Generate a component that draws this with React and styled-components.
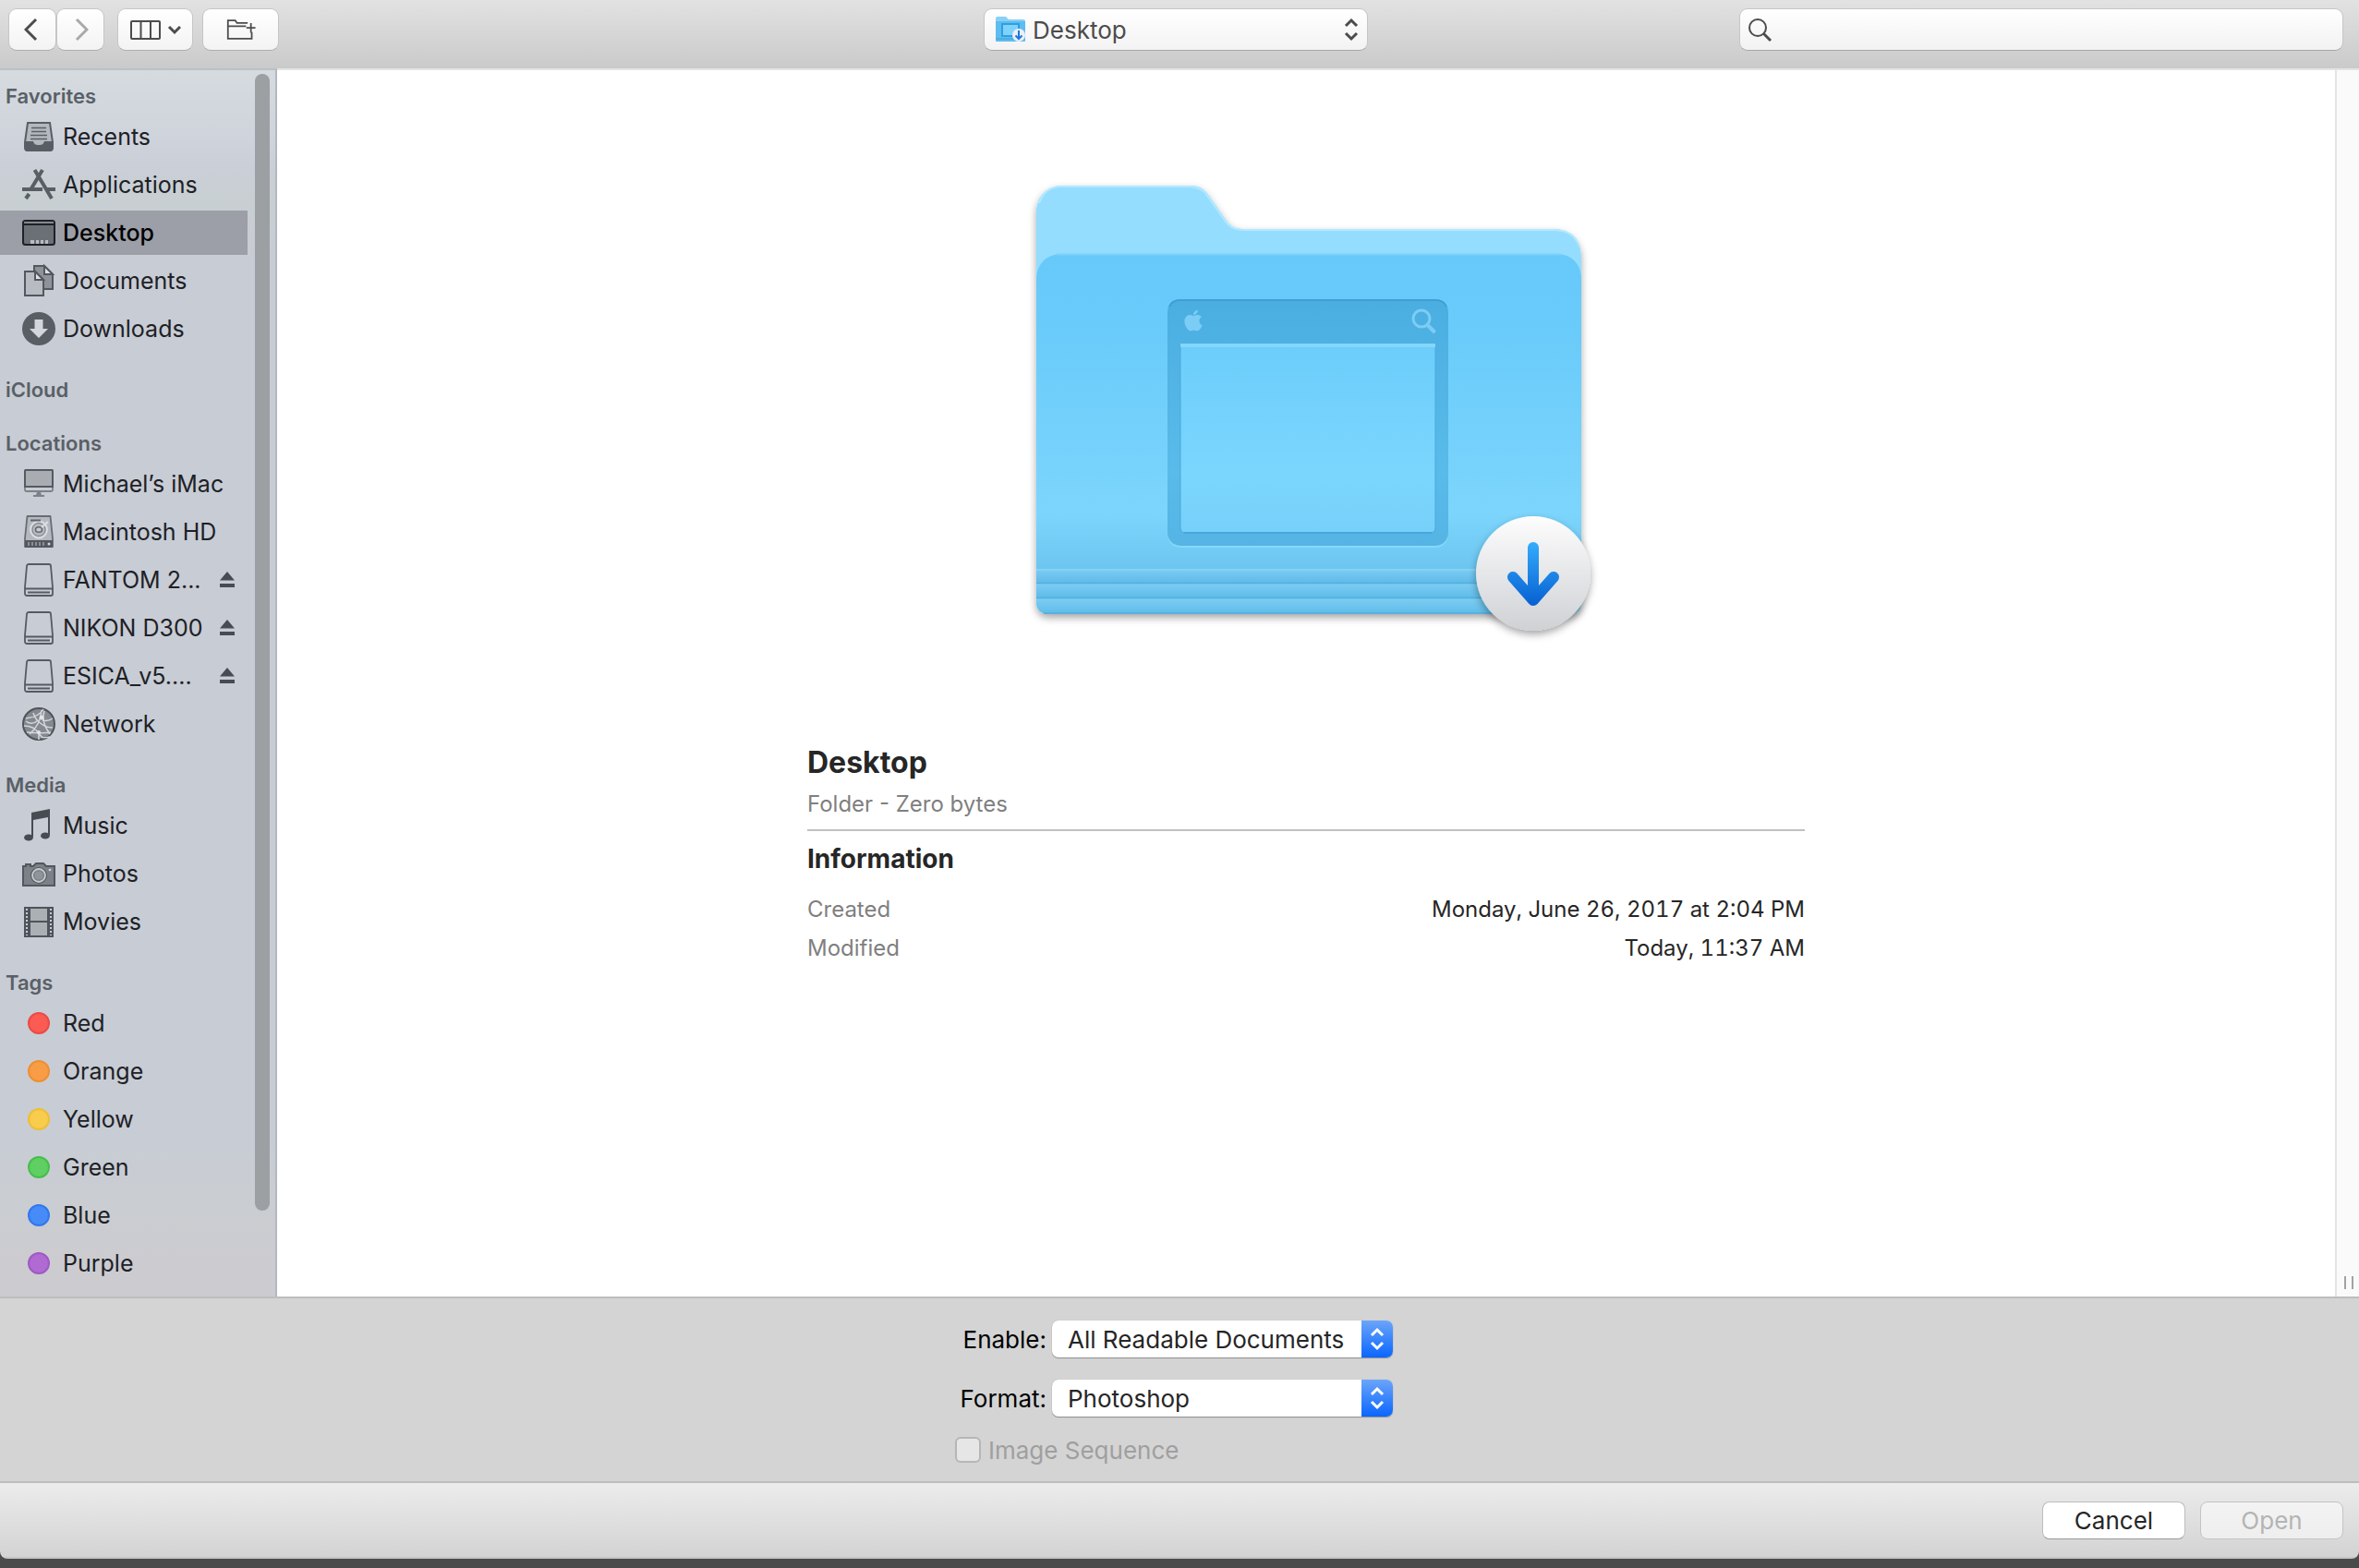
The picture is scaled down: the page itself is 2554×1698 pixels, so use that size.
import React, { useState } from 'react'
import styled, { createGlobalStyle } from 'styled-components'
import { FaApple } from 'react-icons/fa'

const GlobalStyle = createGlobalStyle`
  * {
    box-sizing: border-box;
  }
  body {
    margin: 0;
    background: #4b4b4b;
    font-family: Inter, "Liberation Sans", sans-serif;
    font-size: 26px;
    color: #1c1e20;
  }
  button, input, select {
    font: inherit;
    color: inherit;
    margin: 0;
  }
`;
const Backdrop = styled.div`
  min-height: 100vh;
  padding-bottom: 10px;
  display: flex;
  flex-direction: column;
`;
const Dialog = styled.div`
  flex: 1;
  display: flex;
  flex-direction: column;
  border-radius: 0 0 8px 8px;
  overflow: hidden;
`;

/* toolbar */
const Toolbar = styled.header`
  display: grid;
  grid-template-columns: 1fr 416px 1fr;
  align-items: center;
  padding: 9px 17px 19px 9px;
  background: linear-gradient(#e2e2e2, #cacaca);
`;
const ButtonGroup = styled.div`
  display: flex;
  margin-right: ${(props) => props.$gap || "0"};
`;
const ToolGroups = styled.div`
  display: flex;
`;
const ToolButton = styled.button`
  display: flex;
  align-items: center;
  justify-content: center;
  width: ${(props) => props.$width};
  height: 46px;
  padding: 0;
  border: 1px solid #c6c6c6;
  border-bottom-color: #adadad;
  border-radius: 9px;
  background: linear-gradient(#ffffff, #f3f3f3);
  color: ${(props) => props.$faded ? "#a9a9a9" : "#4c4c4c"};
`;
const SelectBox = styled.div`
  position: relative;
  display: grid;
  > * {
    grid-area: 1 / 1;
  }
`;
const Overlay = styled.span`
  display: flex;
  align-items: center;
  justify-self: ${(props) => props.$side};
  padding: 0 10px 0 13px;
  pointer-events: none;
  z-index: 1;
`;
const PathSelect = styled.select`
  appearance: none;
  width: 100%;
  height: 46px;
  padding: 0 40px 0 52px;
  border: 1px solid #c6c6c6;
  border-bottom-color: #a8a8a8;
  border-radius: 9px;
  background: linear-gradient(#ffffff, #f3f3f3);
  color: #4c4c4c;
`;
const SearchBox = styled.label`
  justify-self: end;
  display: flex;
  align-items: center;
  width: 654px;
  height: 46px;
  padding: 0 8px;
  border: 1px solid #c6c6c6;
  border-bottom-color: #a8a8a8;
  border-radius: 9px;
  background: linear-gradient(#ffffff, #f2f2f2);
`;
const SearchInput = styled.input`
  flex: 1;
  min-width: 0;
  border: 0;
  outline: 0;
  background: none;
`;

/* sidebar */
const Body = styled.div`
  flex: 1;
  display: flex;
`;
const Sidebar = styled.aside`
  display: flex;
  width: 300px;
  border-top: 2px solid #b9c1c8;
  border-right: 2px solid #b3b8c0;
  background: linear-gradient(#d5dbdf 0, #cfd3db 74px, #cbcfd8 100px, #c8cfd2 144px, #c8ccd4 204px, #c8ccd4 1160px, #cacdd1 1230px, #cccbd0 1300px);
`;
const Places = styled.nav`
  width: 268px;
  display: flex;
  flex-direction: column;
  gap: 18px;
  padding: 8px 0;
`;
const PlaceList = styled.ul`
  list-style: none;
  margin: 0;
  padding: 0;
`;
const SectionTitle = styled.h2`
  margin: 0;
  padding-left: 6px;
  font-size: 22px;
  font-weight: 600;
  line-height: 40px;
  color: #596067;
`;
const Place = styled.button`
  display: flex;
  align-items: center;
  gap: 8px;
  width: 100%;
  height: 48px;
  margin-bottom: 4px;
  padding: 0 14px 0 24px;
  border: 0;
  text-align: left;
  white-space: nowrap;
  background: ${(props) => props.$active ? "#9c9fa7" : "none"};
  color: ${(props) => props.$active ? "#000" : "#1d2126"};
  font-weight: ${(props) => props.$active ? "500" : "400"};
  font-size: 25px;
`;
const PlaceName = styled.span`
  flex: 1;
`;
const ScrollTrack = styled.div`
  flex: 1;
  padding: 4px 6px 0 8px;
`;
const ScrollThumb = styled.div`
  height: 93%;
  border-radius: 8px;
  background: #9ca0a3;
`;

/* preview */
const Preview = styled.main`
  flex: 1;
  padding: 84px 20px 0;
  border-top: 2px solid #e4e4e4;
  background: #fff;
`;
const FolderArt = styled.svg`
  display: block;
  margin: 0 auto;
`;
const Info = styled.section`
  width: 100%;
  max-width: 1080px;
  margin: 84px auto 0;
`;
const FileName = styled.h1`
  margin: 0;
  font-size: 32px;
  line-height: 44px;
  font-weight: 700;
  color: #262626;
`;
const FileKind = styled.p`
  margin: 0;
  padding: 4px 0 8px;
  border-bottom: 2px solid #c0c0c0;
  font-size: 24px;
  line-height: 38px;
  color: #7f7f7f;
`;
const InfoTitle = styled.h2`
  margin: 0 0 12px;
  padding-top: 8px;
  font-size: 28px;
  line-height: 44px;
  font-weight: 700;
  color: #262626;
`;
const InfoTable = styled.table`
  width: 100%;
  border-collapse: collapse;
  font-size: 24px;
  line-height: 42px;
`;
const InfoLabel = styled.th`
  padding: 0;
  text-align: left;
  font-weight: 400;
  color: #7f7f7f;
`;
const InfoValue = styled.td`
  padding: 0;
  text-align: right;
  font-variant-numeric: tabular-nums;
  color: #262626;
`;
const Splitter = styled.div`
  display: flex;
  align-items: flex-end;
  gap: 6px;
  width: 26px;
  padding: 0 0 8px 8px;
  border-left: 2px solid #e4e4e4;
  border-top: 2px solid #e4e4e4;
  background: #fafafa;
`;
const Grip = styled.span`
  width: 2px;
  height: 14px;
  background: #a2a2a2;
`;

/* options and footer */
const Options = styled.section`
  display: flex;
  flex-direction: column;
  align-items: center;
  padding: 24px 12px 14px 0;
  border-top: 2px solid #bdbdbd;
  border-bottom: 2px solid #bdbdbd;
  background: #d4d4d4;
`;
const OptionRow = styled.div`
  display: flex;
  align-items: center;
  justify-content: ${(props) => props.$align || "flex-end"};
  gap: ${(props) => props.$gap || "6px"};
  width: 474px;
  height: 40px;
  margin-bottom: ${(props) => props.$space || "0"};
`;
const OptionLabel = styled.label`
  color: ${(props) => props.$disabled ? "#9f9f9f" : "#000"};
`;
const OptionSelectBox = styled(SelectBox)`
  width: 369px;
`;
const OptionSelect = styled.select`
  appearance: none;
  width: 100%;
  height: 40px;
  padding: 0 40px 0 17px;
  border: 0;
  border-radius: 7px;
  background: #fff;
  color: #262626;
  box-shadow: 0 1px 1px #8c8c8c, 0 0 1px #a8a8a8;
`;
const BlueCap = styled.span`
  display: flex;
  align-items: center;
  justify-content: center;
  justify-self: end;
  width: 34px;
  border-radius: 0 7px 7px 0;
  background: linear-gradient(#6ba5fa, #0a66ff);
  pointer-events: none;
  z-index: 1;
`;
const CheckBox = styled.input`
  appearance: none;
  width: 28px;
  height: 28px;
  border: 2px solid #b6b6b6;
  border-radius: 6px;
  background: #e6e6e6;
`;
const Footer = styled.footer`
  display: flex;
  justify-content: flex-end;
  gap: 16px;
  padding: 20px 17px 19px;
  border-bottom: 2px solid #c4c4c4;
  background: linear-gradient(#ececec, #d3d3d3);
`;
const PushButton = styled.button`
  width: 155px;
  height: 41px;
  padding: 0;
  border: 1px solid #bdbdbd;
  border-bottom-color: #9a9a9a;
  border-radius: 8px;
  background: #fff;
  color: #262626;
  &:disabled {
    border-color: #c4c4c4;
    background: linear-gradient(#f3f3f3, #eeeeee);
    color: #b4b4b4;
  }
`;

const RecentsIcon = () => (
  <>
    <path d="M6 3h24l3 21v6a3 3 0 0 1-3 3H6a3 3 0 0 1-3-3v-6z" fill="#b4b9bf" stroke="#595e65" strokeWidth="2" />
    <path d="M3 23h9c1 3 2 4 6 4s5-1 6-4h9v8a3 3 0 0 1-3 3H6a3 3 0 0 1-3-3z" fill="#595e65" />
    <path d="M10 8.500h16M10 12.500h16M9 16.500h18M9 20.500h18" stroke="#595e65" strokeWidth="1.600" />
  </>
)
const ApplicationsIcon = () => (
  <g fill="none" stroke="#595e65">
    <path d="M22 2 10 22M13.500 2l18.500 31" strokeWidth="4" />
    <path d="M0 23h22M27 23h9" strokeWidth="4" />
    <path d="M7.500 28 4 33" strokeWidth="4" />
  </g>
)
const DesktopIcon = () => (
  <>
    <rect x="1" y="5" width="34" height="26" rx="2.500" fill="#6b6f76" stroke="#1e2226" strokeWidth="2" />
    <path d="M2 9h32" stroke="#1e2226" strokeWidth="2" />
    <path d="M2 7h32" stroke="#8f9399" strokeWidth="1.500" />
    <path d="M9 28h4M15 28h3M20 28h3M25 28h3" stroke="#b9bcc2" strokeWidth="4" />
  </>
)
const DocumentsIcon = () => (
  <g stroke="#53585f" strokeWidth="2">
    <path d="M13 2h11l9 9v16H13z" fill="#8e9399" />
    <path d="M24 2v9h9z" fill="#dfe2e6" />
    <path d="M3 8h11l9 9v17H3z" fill="#b8bcc2" />
    <path d="M14 8v9h9z" fill="#dfe2e6" />
  </g>
)
const DownloadsIcon = () => (
  <>
    <circle cx="18" cy="18" r="18" fill="#595e65" />
    <path d="M13.500 8h9v10h5.500L18 28 8 18h5.500z" fill="#d3d6dc" />
  </>
)
const IMacIcon = () => (
  <>
    <rect x="3" y="3" width="30" height="23" rx="1.500" fill="#c8ccd2" stroke="#7d8289" strokeWidth="1.800" />
    <path d="M3 21V4a1 1 0 0 1 1-1h28a1 1 0 0 1 1 1v17z" fill="#a9adb2" stroke="#555a61" strokeWidth="2" />
    <path d="M16 27h4l1 3h-6zM12 30h12v2H12z" fill="#7d8289" />
  </>
)
const DiskIcon = () => (
  <>
    <path d="M5.500 1h25l2.500 24v9H3v-9z" fill="#b5b9bf" stroke="#686d74" strokeWidth="1.800" strokeLinejoin="round" />
    <rect x="3" y="27" width="30" height="8" rx="1" fill="#53585f" />
    <path d="M7 29v4M11 29v4M15 29v4M19 29v4M23 29v4" stroke="#9da2a8" strokeWidth="1.500" />
    <circle cx="29" cy="31" r="1.500" fill="#d0d4da" />
    <circle cx="18" cy="15.500" r="9" fill="none" stroke="#dcdfe3" strokeWidth="1.800" />
    <circle cx="18" cy="15.500" r="7" fill="none" stroke="#7d8289" strokeWidth="1" />
    <ellipse cx="18" cy="15.500" rx="3.500" ry="2.800" fill="#c8ccd2" stroke="#60656c" strokeWidth="1.500" />
    <path d="M9 5.500h11" stroke="#60656c" strokeWidth="2" />
    <path d="M28 7 21 13" stroke="#dcdfe3" strokeWidth="2" />
  </>
)
const DriveIcon = () => (
  <g fill="none" stroke="#565b62" strokeWidth="1.800">
    <path d="M7 1h22a2 2 0 0 1 2 2l2 23v7a2 2 0 0 1-2 2H5a2 2 0 0 1-2-2v-7L5 3a2 2 0 0 1 2-2z" />
    <path d="M3 27.500h30M6 31.500h24" />
  </g>
)
const NetworkIcon = () => (
  <>
    <circle cx="18" cy="18" r="17" fill="#84898f" stroke="#4f545b" strokeWidth="2" />
    <g fill="none" stroke="#d3d6db" strokeWidth="1.500">
      <path d="M4 12c7-1 16-4 19-10M2 20c6 0 12 2 16 8s4 5 12 4M8 29c6-5 12-14 13-26M12 6c2 8 11 16 21 16M24 4c-3 8 1 18 6 25M5 27c8 0 16 2 26 0M18 28v7M4 15c4 3 9 3 13-1M22 14c4 1 8 0 11-2" />
    </g>
    <circle cx="21" cy="11" r="2.500" fill="#e2e4e8" />
    <circle cx="18" cy="27" r="2" fill="#e2e4e8" />
  </>
)
const MusicIcon = () => (
  <>
    <path d="M10 4 30 0v28h-2V9L12 12v18h-2z" fill="#474c53" />
    <ellipse cx="7" cy="31" rx="5" ry="3.500" fill="#474c53" />
    <ellipse cx="25" cy="29" rx="5" ry="3.500" fill="#474c53" />
  </>
)
const PhotosIcon = () => (
  <>
    <path d="M1 10h3V8h5v2h3l3-3h8l3 3h9v21H1z" fill="#7c8187" stroke="#53585f" strokeWidth="2" />
    <circle cx="18" cy="20" r="9" fill="#53585f" />
    <circle cx="18" cy="20" r="7" fill="#7c8187" stroke="#c6cace" strokeWidth="1.800" />
    <circle cx="18" cy="20" r="4.500" fill="#8f9499" />
    <circle cx="30" cy="14" r="1.300" fill="#d6d9dd" />
  </>
)
const MoviesIcon = () => (
  <>
    <rect x="2" y="2" width="32" height="33" fill="#4f545b" />
    <path d="M9 4h18v13H9zM9 19h18v14H9z" fill="#abb0b4" />
    <path d="M5 4v29M31 4v29" stroke="#c8ccd2" strokeWidth="2" strokeDasharray="2 2" />
  </>
)
const tagColors = {
  Red: ["#fc5b54", "#ea4b44"],
  Orange: ["#f89d46", "#ee8f31"],
  Yellow: ["#f8cc4c", "#efbe36"],
  Green: ["#60cf63", "#44be4a"],
  Blue: ["#478bf9", "#2f78ef"],
  Purple: ["#b06bd2", "#a058c6"],
};

const sections = [
  {
    title: "Favorites",
    places: [
      { name: "Recents", icon: <RecentsIcon /> },
      { name: "Applications", icon: <ApplicationsIcon /> },
      { name: "Desktop", icon: <DesktopIcon /> },
      { name: "Documents", icon: <DocumentsIcon /> },
      { name: "Downloads", icon: <DownloadsIcon /> },
    ],
  },
  { title: "iCloud", places: [] },
  {
    title: "Locations",
    places: [
      { name: "Michael’s iMac", icon: <IMacIcon /> },
      { name: "Macintosh HD", icon: <DiskIcon /> },
      { name: "FANTOM 2...", icon: <DriveIcon />, eject: true },
      { name: "NIKON D300", icon: <DriveIcon />, eject: true },
      { name: "ESICA_v5....", icon: <DriveIcon />, eject: true },
      { name: "Network", icon: <NetworkIcon /> },
    ],
  },
  {
    title: "Media",
    places: [
      { name: "Music", icon: <MusicIcon /> },
      { name: "Photos", icon: <PhotosIcon /> },
      { name: "Movies", icon: <MoviesIcon /> },
    ],
  },
  {
    title: "Tags",
    places: Object.keys(tagColors).map((name) => ({
      name,
      icon: <circle cx="18" cy="18" r="11" fill={tagColors[name][0]} stroke={tagColors[name][1]} strokeWidth="2" />,
    })),
  },
];

const Arrows = ({ color }) => (
  <svg width="16" height="28" viewBox="0 0 16 28" fill="none" stroke={color} strokeWidth="3">
    <path d="M2 10l6-6 6 6M2 18l6 6 6-6" />
  </svg>
)

const SmallFolder = () => (
  <svg width="34" height="32" viewBox="0 0 34 32">
    <path d="M0 28V4a2 2 0 0 1 2-2h9l3 3h16a2 2 0 0 1 2 2v21z" fill="#8ad0f5" />
    <path d="M0 7h32v21a1 1 0 0 1-1 1H1a1 1 0 0 1-1-1z" fill="#5dbcf0" />
    <path d="M7 10h18v13H7z" fill="#7fd2fb" stroke="#2f9fe0" strokeWidth="2" />
    <path d="M0 26h32" stroke="#49a9e0" strokeWidth="1.500" />
    <circle cx="25" cy="22" r="7" fill="#eceff3" />
    <path d="M25 17v9M21.500 22.500 25 26l3.500-3.500" fill="none" stroke="#1a78e0" strokeWidth="2" />
  </svg>
)

const DesktopFolder = () => (
  <FolderArt width="640" height="560" viewBox="0 0 640 560" role="img" aria-label="Desktop folder">
    <defs>
      <linearGradient id="front" x1="0" y1="0" x2="0" y2="1">
        <stop offset="0" stopColor="#67c9fa" />
        <stop offset="0.200" stopColor="#69cbfa" />
        <stop offset="0.720" stopColor="#7cd5fc" />
        <stop offset="0.870" stopColor="#6cc6f0" />
        <stop offset="1" stopColor="#68c3ef" />
      </linearGradient>
      <linearGradient id="screen" x1="0" y1="0" x2="0" y2="1">
        <stop offset="0" stopColor="#6ccdfb" />
        <stop offset="0.700" stopColor="#7bd6fd" />
        <stop offset="1" stopColor="#76d0f9" />
      </linearGradient>
      <linearGradient id="frame" x1="0" y1="0" x2="0" y2="1">
        <stop offset="0" stopColor="#4baee1" />
        <stop offset="0.700" stopColor="#59bbe9" />
        <stop offset="1" stopColor="#55b4e4" />
      </linearGradient>
      <linearGradient id="pleat" x1="0" y1="0" x2="0" y2="1">
        <stop offset="0" stopColor="#7ccdf2" />
        <stop offset="1" stopColor="#5fbbe9" />
      </linearGradient>
      <linearGradient id="badge" x1="0" y1="0" x2="0" y2="1">
        <stop offset="0" stopColor="#fdfdfd" />
        <stop offset="1" stopColor="#cfd1d5" />
      </linearGradient>
      <linearGradient id="arrow" gradientUnits="userSpaceOnUse" x1="0" y1="427" x2="0" y2="496">
        <stop offset="0" stopColor="#35acfb" />
        <stop offset="1" stopColor="#0660d2" />
      </linearGradient>
      <filter id="shadow" x="-10%" y="-10%" width="120%" height="125%">
        <feDropShadow dx="0" dy="4" stdDeviation="4" floodColor="#000" floodOpacity="0.350" />
      </filter>
    </defs>
    <path
      d="M28 70c0-18 12-29 28-29h138c10 0 16 3 21 11l19 27c5 7 11 9 20 9h334c18 0 30 12 30 30v373c0 9-5 14-14 14H42c-9 0-14-5-14-14z"
      fill="#95ddff"
      filter="url(#shadow)"
    />
    <path d="M31 60c4-12 12-18 25-18h138c9 0 15 3 20 11l19 27c5 7 11 9 21 9h334c14 0 24 6 28 18" fill="none" stroke="#b2e9ff" strokeWidth="2" />
    <path d="M28 143c0-18 12-28 28-28h534c17 0 28 10 28 28v348c0 9-5 14-14 14H42c-9 0-14-5-14-14z" fill="url(#front)" />
    <path d="M50 115.500h546" stroke="#7dd0f9" strokeWidth="2" />
    <path d="M28 456h590v15H28z" fill="url(#pleat)" />
    <path d="M28 472h590v15H28z" fill="url(#pleat)" />
    <path d="M28 488h590v5c0 8-6 12-14 12H42c-8 0-14-4-14-12z" fill="url(#pleat)" />
    <path d="M28 457h590" stroke="#84d2f5" strokeWidth="2" />
    <path d="M28 471.500h590M28 487.500h590" stroke="#52aede" strokeWidth="1.500" />
    <path d="M36 504h574" stroke="#55b1e0" strokeWidth="2" />
    <rect x="170" y="166" width="304" height="267" rx="14" fill="#86d8fa" />
    <rect x="170" y="164" width="304" height="267" rx="14" fill="url(#frame)" />
    <path d="M172 172c2-5 6-7 12-7h276c6 0 10 2 12 7" fill="none" stroke="#3f9fd5" strokeWidth="2" />
    <path d="M184 212h276v200a5 5 0 0 1-5 5H189a5 5 0 0 1-5-5z" fill="url(#screen)" stroke="#4aa9dd" strokeWidth="1" />
    <path d="M184 214h276" stroke="#84d6fb" strokeWidth="4" />
    <path d="M188 417h268" stroke="#47a7dc" strokeWidth="2" />
    <FaApple x="185" y="174" width="25" height="25" color="#7ccdf5" />
    <g fill="none" stroke="#7ccdf5">
      <circle cx="445" cy="185" r="9" strokeWidth="3" />
      <path d="M451.500 192l8 8" strokeWidth="4" />
    </g>
    <circle cx="566" cy="461" r="62" fill="url(#badge)" filter="url(#shadow)" />
    <path d="M566 433v57M544 465l22 25 22-25" fill="none" stroke="url(#arrow)" strokeWidth="12" strokeLinecap="round" strokeLinejoin="round" />
  </FolderArt>
)

const App = () => {
  const [active, setActive] = useState("Desktop");
  return (
    <Backdrop>
      <GlobalStyle />
      <Dialog>
        <Toolbar>
          <ToolGroups>
            <ButtonGroup $gap="14px">
              <ToolButton $width="52px" aria-label="Back">
                <svg width="18" height="26" viewBox="0 0 18 26" fill="none" stroke="currentColor" strokeWidth="3"><path d="M13 2 2 13l11 11" /></svg>
              </ToolButton>
              <ToolButton $width="52px" $faded aria-label="Forward">
                <svg width="18" height="26" viewBox="0 0 18 26" fill="none" stroke="currentColor" strokeWidth="3"><path d="M5 2l11 11L5 24" /></svg>
              </ToolButton>
            </ButtonGroup>
            <ButtonGroup $gap="10px">
              <ToolButton $width="82px" aria-label="View">
                <svg width="56" height="24" viewBox="0 0 56 24" fill="none" stroke="currentColor" strokeWidth="2">
                  <rect x="2" y="3" width="31" height="19" rx="1" />
                  <path d="M12.500 3v19M23 3v19" />
                  <path d="M43 9l6 6 6-6" strokeWidth="3" />
                </svg>
              </ToolButton>
            </ButtonGroup>
            <ToolButton $width="83px" aria-label="New Folder">
              <svg width="32" height="28" viewBox="0 0 36 28" fill="none" stroke="currentColor" strokeWidth="2">
                <path d="M26 6H13l-2-3H2v22h29v-8M2 10h22M30 6v12M24.500 12h11" />
              </svg>
            </ToolButton>
          </ToolGroups>
          <SelectBox>
            <Overlay $side="start"><SmallFolder /></Overlay>
            <PathSelect aria-label="Location">
              <option>Desktop</option>
            </PathSelect>
            <Overlay $side="end"><Arrows color="#4c4c4c" /></Overlay>
          </SelectBox>
          <SearchBox>
            <svg width="28" height="28" viewBox="0 0 28 28" fill="none" stroke="#4c4c4c" strokeWidth="2">
              <circle cx="11" cy="12" r="9" />
              <path d="M17 18l8 8" strokeWidth="3" />
            </svg>
            <SearchInput type="text" aria-label="Search" />
          </SearchBox>
        </Toolbar>
        <Body>
          <Sidebar>
            <Places>
              {sections.map((section) =>
                <div key={section.title}>
                  <SectionTitle>{section.title}</SectionTitle>
                  <PlaceList>
                    {section.places.map((place) =>
                      <li key={place.name}>
                        <Place $active={place.name === active} onClick={() => setActive(place.name)}>
                          <svg width="36" height="36" viewBox="0 0 36 36">{place.icon}</svg>
                          <PlaceName>{place.name}</PlaceName>
                          {place.eject ?
                            <svg width="16" height="18" viewBox="0 0 16 18" fill="#474c53">
                              <path d="M8 0l8 9.500H0zM0 13h16v4H0z" />
                            </svg> : null}
                        </Place>
                      </li>
                    )}
                  </PlaceList>
                </div>
              )}
            </Places>
            <ScrollTrack>
              <ScrollThumb />
            </ScrollTrack>
          </Sidebar>
          <Preview>
            <DesktopFolder />
            <Info>
              <FileName>Desktop</FileName>
              <FileKind>Folder - Zero bytes</FileKind>
              <InfoTitle>Information</InfoTitle>
              <InfoTable>
                <tbody>
                  <tr>
                    <InfoLabel scope="row">Created</InfoLabel>
                    <InfoValue>Monday, June 26, 2017 at 2:04 PM</InfoValue>
                  </tr>
                  <tr>
                    <InfoLabel scope="row">Modified</InfoLabel>
                    <InfoValue>Today, 11:37 AM</InfoValue>
                  </tr>
                </tbody>
              </InfoTable>
            </Info>
          </Preview>
          <Splitter>
            <Grip />
            <Grip />
          </Splitter>
        </Body>
        <Options>
          <OptionRow $space="24px">
            <OptionLabel htmlFor="enable">Enable:</OptionLabel>
            <OptionSelectBox>
              <OptionSelect id="enable">
                <option>All Readable Documents</option>
              </OptionSelect>
              <BlueCap><Arrows color="#fff" /></BlueCap>
            </OptionSelectBox>
          </OptionRow>
          <OptionRow $space="16px">
            <OptionLabel htmlFor="format">Format:</OptionLabel>
            <OptionSelectBox>
              <OptionSelect id="format">
                <option>Photoshop</option>
              </OptionSelect>
              <BlueCap><Arrows color="#fff" /></BlueCap>
            </OptionSelectBox>
          </OptionRow>
          <OptionRow $align="flex-start" $gap="8px">
            <CheckBox type="checkbox" id="sequence" disabled />
            <OptionLabel htmlFor="sequence" $disabled>Image Sequence</OptionLabel>
          </OptionRow>
        </Options>
        <Footer>
          <PushButton>Cancel</PushButton>
          <PushButton disabled>Open</PushButton>
        </Footer>
      </Dialog>
    </Backdrop>
  )
}

export default App
